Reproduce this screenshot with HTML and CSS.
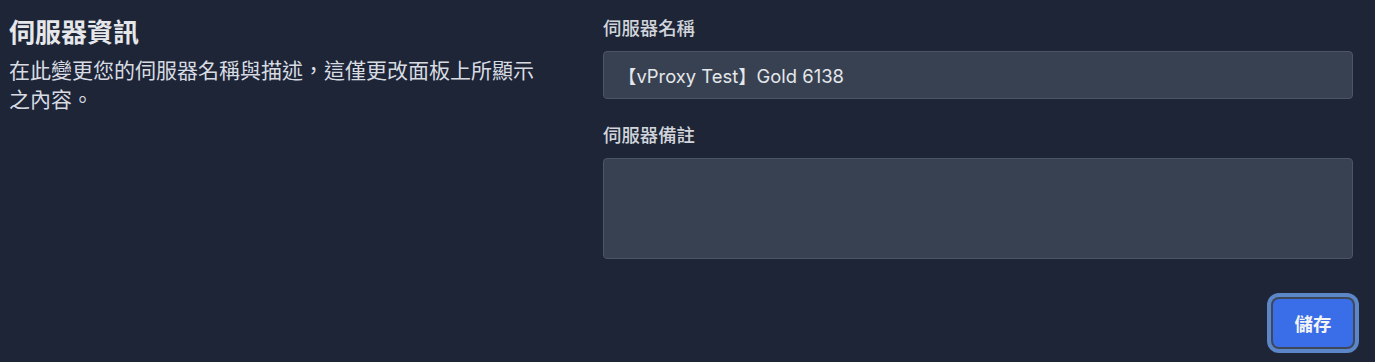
FILE: index.html
```html
<!DOCTYPE html>
<html lang="zh-Hant">
<head>
<meta charset="utf-8">
<title>伺服器資訊</title>
<link rel="stylesheet" href="styles.css">
</head>
<body>
<div class="section">
  <div class="intro">
    <h2 class="title">伺服器資訊</h2>
    <p class="desc">在此變更您的伺服器名稱與描述，這僅更改面板上所顯示之內容。</p>
  </div>
  <form class="form">
    <label class="label" for="name">伺服器名稱</label>
    <input class="input" id="name" type="text" value="【vProxy Test】Gold 6138">
    <label class="label label-second" for="note">伺服器備註</label>
    <textarea class="textarea" id="note"></textarea>
    <div class="actions">
      <button class="btn" type="button">儲存</button>
    </div>
  </form>
</div>
</body>
</html>
```

FILE: styles.css
```css
html, body {
  margin: 0;
  padding: 0;
  background: #1e2537;
  height: 100%;
}
body {
  font-family: "Inter", "Noto Sans CJK TC", sans-serif;
  color: #d1d5db;
}
.section {
  display: grid;
  grid-template-columns: 1fr 750px;
  padding: 12px 22px 0 9px;
}
.intro {
  max-width: 535px;
  padding-top: 1px;
}
.title {
  margin: 0;
  font-family: "Noto Sans CJK TC", sans-serif;
  font-size: 26px;
  line-height: 36px;
  font-weight: 700;
  color: #e5e7eb;
}
.desc {
  margin: 6px 0 0;
  font-family: "Noto Sans CJK TC", sans-serif;
  font-size: 21px;
  line-height: 29px;
  color: #d8dce2;
}
.form {
  display: flex;
  flex-direction: column;
  padding-top: 1px;
}
.label {
  display: block;
  font-family: "Noto Sans CJK TC", sans-serif;
  font-size: 18.4px;
  line-height: 28px;
  font-weight: 500;
  color: #d1d5db;
}
.label-second {
  margin-top: 21px;
}
.input, .textarea {
  box-sizing: border-box;
  margin-top: 10px;
  width: 100%;
  background: #374151;
  border: 1px solid #4b5563;
  border-radius: 4px;
  color: #e5e7eb;
  font-family: "Inter", "Noto Sans CJK TC", sans-serif;
  font-size: 18.4px;
  padding: 0 14px;
  outline: none;
}
.input {
  height: 48px;
}
.textarea {
  height: 101px;
  resize: none;
  display: block;
}
.actions {
  display: flex;
  justify-content: flex-end;
  margin-top: 40px;
}
.btn {
  width: 80px;
  height: 48px;
  border: none;
  border-radius: 6px;
  background: #3a6ee8;
  color: #f3f4f6;
  font-family: "Noto Sans CJK TC", sans-serif;
  font-size: 18.4px;
  font-weight: 700;
  box-shadow: 0 0 0 2px #3f4859, 0 0 0 6px #5b86c8;
  cursor: pointer;
}
```
